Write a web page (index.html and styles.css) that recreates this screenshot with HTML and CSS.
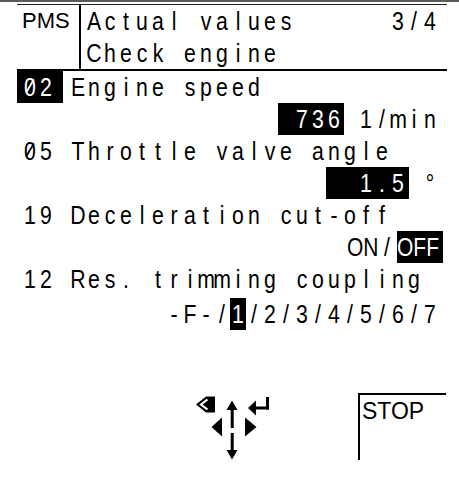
FILE: index.html
```html
<!DOCTYPE html>
<html>
<head>
<meta charset="utf-8">
<link rel="stylesheet" href="styles.css">
</head>
<body>
<div class="topbar"></div>
<div class="frame">
  <div class="head">
    <div class="pms">PMS</div>
    <div class="title">
      <div class="ln top">
        <div class="grp"><span>A</span><span>c</span><span>t</span><span>u</span><span>a</span><span>l</span><span></span><span>v</span><span>a</span><span>l</span><span>u</span><span>e</span><span>s</span></div>
        <div class="grp"><span>3</span><span>/</span><span>4</span></div>
      </div>
      <div class="ln"><span>C</span><span>h</span><span>e</span><span>c</span><span>k</span><span></span><span>e</span><span>n</span><span>g</span><span>i</span><span>n</span><span>e</span></div>
    </div>
  </div>
  <div class="list">
    <div class="ln"><div class="inv i02"><span class="z">0</span><span>2</span></div><span></span><span>E</span><span>n</span><span>g</span><span>i</span><span>n</span><span>e</span><span></span><span>s</span><span>p</span><span>e</span><span>e</span><span>d</span></div>
    <div class="ln end"><div class="inv i736"><span></span><span>7</span><span>3</span><span>6</span></div><span></span><span>1</span><span>/</span><span>m</span><span>i</span><span>n</span></div>
    <div class="ln"><span class="z">0</span><span>5</span><span></span><span>T</span><span>h</span><span>r</span><span>o</span><span>t</span><span>t</span><span>l</span><span>e</span><span></span><span>v</span><span>a</span><span>l</span><span>v</span><span>e</span><span></span><span>a</span><span>n</span><span>g</span><span>l</span><span>e</span></div>
    <div class="ln end"><div class="inv i15"><span></span><span></span><span>1</span><span>.</span><span>5</span></div><span></span><span>°</span></div>
    <div class="ln"><span>1</span><span>9</span><span></span><span>D</span><span>e</span><span>c</span><span>e</span><span>l</span><span>e</span><span>r</span><span>a</span><span>t</span><span>i</span><span>o</span><span>n</span><span></span><span>c</span><span>u</span><span>t</span><span>-</span><span>o</span><span>f</span><span>f</span></div>
    <div class="ln end"><div class="word on"><span>ON</span></div><span>/</span><div class="word inv off"><span>OFF</span></div></div>
    <div class="ln"><span>1</span><span>2</span><span></span><span>R</span><span>e</span><span>s</span><span>.</span><span></span><span>t</span><span>r</span><span>i</span><span>m</span><span>m</span><span>i</span><span>n</span><span>g</span><span></span><span>c</span><span>o</span><span>u</span><span>p</span><span>l</span><span>i</span><span>n</span><span>g</span></div>
    <div class="ln end last"><span>-</span><span>F</span><span>-</span><span>/</span><div class="inv i1"><span>1</span></div><span>/</span><span>2</span><span>/</span><span>3</span><span>/</span><span>4</span><span>/</span><span>5</span><span>/</span><span>6</span><span>/</span><span>7</span></div>
  </div>
</div>
<div class="foot">
  <svg class="keys" viewBox="0 0 78 68" width="78" height="68">
    <polygon points="1,9.5 11,1.5 20,1.5 20,17.5 11,17.5" fill="#000"/>
    <polyline points="12.5,4.5 6,9.5 12.5,14.5" fill="none" stroke="#fff" stroke-width="2.2"/>
    <polygon points="37,5.5 31.5,15 42.5,15" fill="#000"/>
    <rect x="35.7" y="14" width="3" height="19" fill="#000"/>
    <rect x="35.7" y="38" width="3" height="18" fill="#000"/>
    <polygon points="31.5,55 42.5,55 37,64.5" fill="#000"/>
    <polygon points="16.5,32 27,22.5 27,41.5" fill="#000"/>
    <polygon points="50,22.5 61.5,32 50,41.5" fill="#000"/>
    <rect x="71" y="2" width="3" height="12.5" fill="#000"/>
    <rect x="59" y="11.5" width="15" height="3" fill="#000"/>
    <polygon points="53,13 61,5.5 61,20.5" fill="#000"/>
  </svg>
  <div class="stop">STOP</div>
</div>
</body>
</html>
```
FILE: styles.css
```css
* { box-sizing: border-box; }
body {
  margin: 0;
  width: 459px;
  height: 480px;
  overflow: hidden;
  background: #fff;
  color: #000;
  font-family: "Liberation Sans", Arial, sans-serif;
}
.topbar { height: 2px; background: #5a5a5a; }
.frame { margin: 2px 0 0 17px; width: 430px; }
.head {
  display: flex;
  height: 67px;
  border-top: 1px solid #222;
  border-bottom: 2px solid #000;
}
.pms {
  width: 64px;
  border-right: 2px solid #000;
  padding-left: 5px;
  font-size: 22px;
  line-height: 32px;
}
.title { flex: 1; padding: 0 9px 0 5px; }
.list { padding: 0 9px 0 5px; }
.ln {
  display: flex;
  height: 32px;
  font-size: 25px;
  line-height: 32px;
}
.ln span {
  flex: none;
  width: 16px;
  display: flex;
  justify-content: center;
  transform: scaleX(.85);
}
.top { justify-content: space-between; }
.grp { display: flex; }
.end { justify-content: flex-end; }
.last { margin-top: 3px; }
.inv { display: flex; background: #000; color: #fff; }
.i02 { margin: 0 -9px 0 -5px; padding: 0 9px 0 5px; }
.i736 { margin-right: -2px; padding-right: 2px; }
.i15 { margin-right: -3px; padding-right: 3px; }
.word { display: flex; justify-content: center; }
.word span { width: auto; transform: scaleX(.84); }
.on { width: 32px; }
.off { width: 46px; margin-left: 2px; margin-right: -5px; padding-right: 5px; }
.z { position: relative; }
.z::after {
  content: "";
  position: absolute;
  left: 50%;
  top: 48%;
  width: 2px;
  height: 16px;
  background: currentColor;
  transform: translate(-50%, -50%) rotate(35deg);
}
.foot {
  display: flex;
  align-items: flex-start;
  margin-top: 63px;
  padding-left: 195px;
}
.keys { display: block; margin-top: 2px; }
.stop {
  margin-left: 85px;
  width: 88px;
  height: 67px;
  border-left: 2px solid #000;
  border-top: 2px solid #000;
  padding: 5px 0 0 2px;
  font-size: 23px;
  line-height: 1;
}
```
